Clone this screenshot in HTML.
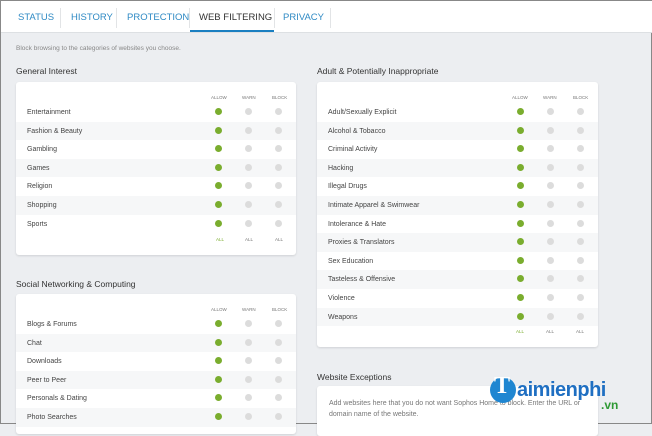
<!DOCTYPE html><html><head><style>
*{margin:0;padding:0;box-sizing:border-box}
body{width:652px;height:424px;overflow:hidden;background:#eceef1;font-family:"Liberation Sans",sans-serif;position:relative;border:1px solid #888}
.tabs{position:absolute;left:0;top:0;width:652px;height:32px;background:#fff;border-bottom:1px solid #dde0e3}
.tab{position:absolute;top:11px;font-size:9.5px;color:#2f8ac4}
.sep{position:absolute;top:7px;width:1px;height:20px;background:#e2e4e6}
.ul{position:absolute;left:189px;top:29px;width:84px;height:2px;background:#1a7fc1}
.t{position:absolute;font-size:8.5px;color:#333}
.s{position:absolute;font-size:6.5px;color:#888}
.card{position:absolute;background:#fff;border-radius:3px;box-shadow:0 1px 2px rgba(0,0,0,.12)}
.row{position:absolute;left:0;right:0;height:18.6px;font-size:7px;color:#444;padding-left:11px;line-height:20px}
.row.a{background:#f6f7f8}
.d{position:absolute;top:5px;width:7px;height:7px;border-radius:50%;background:#dcdcdc}
.d.g{background:#7aad2e}
.h{position:absolute;font-size:4.5px;color:#777}
</style></head><body>
<div class="tabs">
<span class="tab" style="left:17px">STATUS</span><div class="sep" style="left:59px"></div>
<span class="tab" style="left:70px">HISTORY</span><div class="sep" style="left:115px"></div>
<span class="tab" style="left:126px">PROTECTION</span><div class="sep" style="left:188px"></div>
<span class="tab" style="left:198px;color:#333">WEB FILTERING</span><div class="sep" style="left:273px"></div>
<span class="tab" style="left:282px">PRIVACY</span><div class="sep" style="left:329px"></div>
<div class="ul"></div></div>
<div class="s" style="left:15px;top:44px">Block browsing to the categories of websites you choose.</div>
<div class="t" style="left:15px;top:65px">General Interest</div>
<div class="t" style="left:316px;top:65px">Adult &amp; Potentially Inappropriate</div>
<div class="t" style="left:15px;top:278px">Social Networking &amp; Computing</div>
<div class="t" style="left:316px;top:371px">Website Exceptions</div>

<div class="card" style="left:15px;top:81px;width:280px;height:173px">
<span class="h" style="left:195px;top:13px">ALLOW</span><span class="h" style="left:226px;top:13px">WARN</span><span class="h" style="left:256px;top:13px">BLOCK</span>
<div class="row" style="top:21px">Entertainment<i class="d g" style="left:199px"></i><i class="d" style="left:229px"></i><i class="d" style="left:259px"></i></div>
<div class="row a" style="top:39.6px">Fashion &amp; Beauty<i class="d g" style="left:199px"></i><i class="d" style="left:229px"></i><i class="d" style="left:259px"></i></div>
<div class="row" style="top:58.2px">Gambling<i class="d g" style="left:199px"></i><i class="d" style="left:229px"></i><i class="d" style="left:259px"></i></div>
<div class="row a" style="top:76.8px">Games<i class="d g" style="left:199px"></i><i class="d" style="left:229px"></i><i class="d" style="left:259px"></i></div>
<div class="row" style="top:95.4px">Religion<i class="d g" style="left:199px"></i><i class="d" style="left:229px"></i><i class="d" style="left:259px"></i></div>
<div class="row a" style="top:114px">Shopping<i class="d g" style="left:199px"></i><i class="d" style="left:229px"></i><i class="d" style="left:259px"></i></div>
<div class="row" style="top:132.6px">Sports<i class="d g" style="left:199px"></i><i class="d" style="left:229px"></i><i class="d" style="left:259px"></i></div>
<span class="h" style="left:200px;top:155px;color:#7aad2e">ALL</span><span class="h" style="left:229px;top:155px">ALL</span><span class="h" style="left:259px;top:155px">ALL</span>
</div>

<div class="card" style="left:316px;top:81px;width:281px;height:265px">
<span class="h" style="left:195px;top:13px">ALLOW</span><span class="h" style="left:226px;top:13px">WARN</span><span class="h" style="left:256px;top:13px">BLOCK</span>
<div class="row" style="top:21px">Adult/Sexually Explicit<i class="d g" style="left:200px"></i><i class="d" style="left:230px"></i><i class="d" style="left:260px"></i></div>
<div class="row a" style="top:39.6px">Alcohol &amp; Tobacco<i class="d g" style="left:200px"></i><i class="d" style="left:230px"></i><i class="d" style="left:260px"></i></div>
<div class="row" style="top:58.2px">Criminal Activity<i class="d g" style="left:200px"></i><i class="d" style="left:230px"></i><i class="d" style="left:260px"></i></div>
<div class="row a" style="top:76.8px">Hacking<i class="d g" style="left:200px"></i><i class="d" style="left:230px"></i><i class="d" style="left:260px"></i></div>
<div class="row" style="top:95.4px">Illegal Drugs<i class="d g" style="left:200px"></i><i class="d" style="left:230px"></i><i class="d" style="left:260px"></i></div>
<div class="row a" style="top:114px">Intimate Apparel &amp; Swimwear<i class="d g" style="left:200px"></i><i class="d" style="left:230px"></i><i class="d" style="left:260px"></i></div>
<div class="row" style="top:132.6px">Intolerance &amp; Hate<i class="d g" style="left:200px"></i><i class="d" style="left:230px"></i><i class="d" style="left:260px"></i></div>
<div class="row a" style="top:151.2px">Proxies &amp; Translators<i class="d g" style="left:200px"></i><i class="d" style="left:230px"></i><i class="d" style="left:260px"></i></div>
<div class="row" style="top:169.8px">Sex Education<i class="d g" style="left:200px"></i><i class="d" style="left:230px"></i><i class="d" style="left:260px"></i></div>
<div class="row a" style="top:188.4px">Tasteless &amp; Offensive<i class="d g" style="left:200px"></i><i class="d" style="left:230px"></i><i class="d" style="left:260px"></i></div>
<div class="row" style="top:207px">Violence<i class="d g" style="left:200px"></i><i class="d" style="left:230px"></i><i class="d" style="left:260px"></i></div>
<div class="row a" style="top:225.6px">Weapons<i class="d g" style="left:200px"></i><i class="d" style="left:230px"></i><i class="d" style="left:260px"></i></div>
<span class="h" style="left:199px;top:247px;color:#7aad2e">ALL</span><span class="h" style="left:229px;top:247px">ALL</span><span class="h" style="left:259px;top:247px">ALL</span>
</div>

<div class="card" style="left:15px;top:293px;width:280px;height:140px">
<span class="h" style="left:195px;top:13px">ALLOW</span><span class="h" style="left:226px;top:13px">WARN</span><span class="h" style="left:256px;top:13px">BLOCK</span>
<div class="row" style="top:21px">Blogs &amp; Forums<i class="d g" style="left:199px"></i><i class="d" style="left:229px"></i><i class="d" style="left:259px"></i></div>
<div class="row a" style="top:39.6px">Chat<i class="d g" style="left:199px"></i><i class="d" style="left:229px"></i><i class="d" style="left:259px"></i></div>
<div class="row" style="top:58.2px">Downloads<i class="d g" style="left:199px"></i><i class="d" style="left:229px"></i><i class="d" style="left:259px"></i></div>
<div class="row a" style="top:76.8px">Peer to Peer<i class="d g" style="left:199px"></i><i class="d" style="left:229px"></i><i class="d" style="left:259px"></i></div>
<div class="row" style="top:95.4px">Personals &amp; Dating<i class="d g" style="left:199px"></i><i class="d" style="left:229px"></i><i class="d" style="left:259px"></i></div>
<div class="row a" style="top:114px">Photo Searches<i class="d g" style="left:199px"></i><i class="d" style="left:229px"></i><i class="d" style="left:259px"></i></div>
</div>

<div class="card" style="left:316px;top:385px;width:281px;height:50px">
<div class="s" style="left:12px;top:12px;width:260px;font-size:7px;line-height:11px;color:#777">Add websites here that you do not want Sophos Home to block. Enter the URL or domain name of the website.</div>
</div>
<div style="position:absolute;left:489px;top:376px;width:26px;height:26px;border-radius:50%;background:#1f86d1"></div>
<div style="position:absolute;left:493px;top:372px;font:bold 24px 'Liberation Serif',serif;color:#fff">T</div>
<div style="position:absolute;left:516px;top:378px;font:bold 20px 'Liberation Sans',sans-serif;color:#1f6fc2;letter-spacing:-.5px">aimienphi</div>
<div style="position:absolute;left:600px;top:397px;font:bold 12px 'Liberation Sans',sans-serif;color:#2f9a35">.vn</div>
</body></html>
